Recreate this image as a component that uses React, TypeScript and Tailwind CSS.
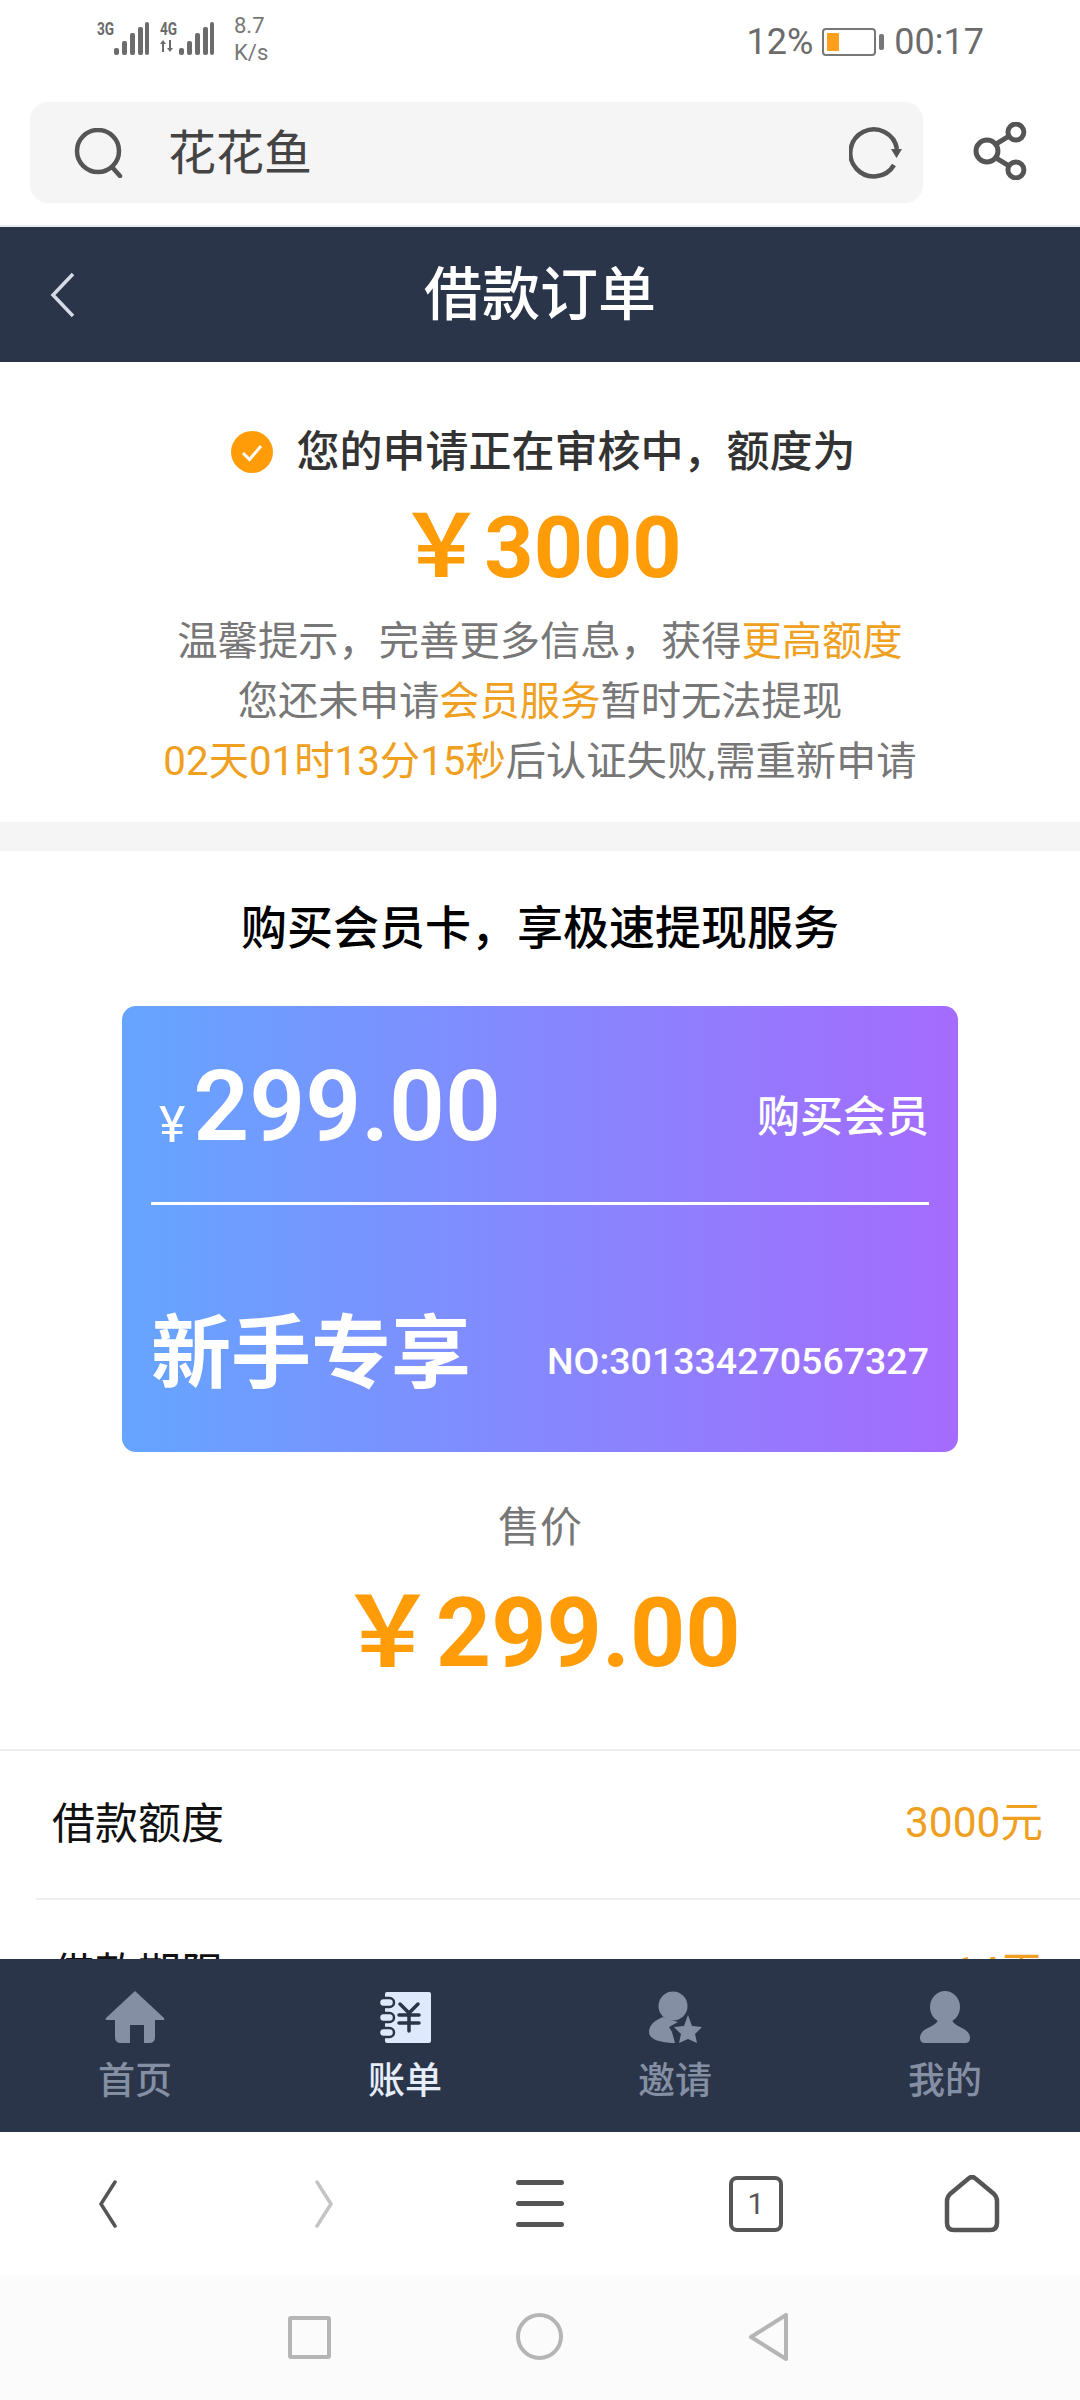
import React from 'react';

const fontStack = "font-['Roboto','Noto_Sans_CJK_SC',sans-serif]";

const StatusBar = () => (
  <div className="flex h-[102px] items-start justify-between bg-white pl-[97px] pr-[96px]">
    <div className="flex items-start pt-[14px] text-[#6b6b6b]">
      <span className="mt-[6px] w-[17px] origin-left scale-x-[0.72] text-[19px] font-bold leading-[18px]">3G</span>
      <svg width="36" height="36" viewBox="0 0 36 36" className="mt-[7px]" fill="#6b6b6b">
        <rect x="0" y="27" width="5" height="7" rx="2" />
        <rect x="8" y="20" width="5" height="14" rx="2" />
        <rect x="16" y="12" width="5" height="22" rx="2" />
        <rect x="24" y="6" width="5" height="28" rx="2" />
        <rect x="31" y="1" width="4" height="33" rx="2" />
      </svg>
      <div className="ml-[10px] flex flex-col">
        <span className="mt-[6px] w-[18px] origin-left scale-x-[0.72] text-[19px] font-bold leading-[18px]">4G</span>
        <svg width="18" height="12" viewBox="0 0 18 12" className="mt-[2px]" fill="#6b6b6b">
          <path d="M3 0l3 4H4v8H2V4H0zM9 0h2v8h2l-3 4-3-4h2z" />
        </svg>
      </div>
      <svg width="36" height="36" viewBox="0 0 36 36" className="mt-[7px]" fill="#6b6b6b">
        <rect x="1" y="27" width="5" height="7" rx="2" />
        <rect x="9" y="20" width="5" height="14" rx="2" />
        <rect x="17" y="12" width="5" height="22" rx="2" />
        <rect x="25" y="6" width="5" height="28" rx="2" />
        <rect x="32" y="1" width="4" height="33" rx="2" />
      </svg>
      <div className="ml-[20px] -mt-[2px] flex flex-col text-[22px] leading-[27px] text-[#777]">
        <span>8.7</span>
        <span>K/s</span>
      </div>
    </div>
    <div className="flex items-center pt-[22px] text-[36px] leading-[40px] text-[#6b6b6b]">
      <span>12%</span>
      <div className="ml-[9px] h-[28px] w-[54px] rounded-[4px] border-2 border-[#777] p-[3px]">
        <div className="h-full w-[12px] rounded-[1px] bg-[#ff9f1c]" />
      </div>
      <div className="ml-[3px] h-[16px] w-[5px] rounded-[2px] bg-[#777]" />
      <span className="ml-[10px]">00:17</span>
    </div>
  </div>
);

const SearchRow = () => (
  <div className="flex h-[123px] bg-white pl-[30px] pr-[53px]">
    <div className="flex h-[101px] w-[895px] items-center rounded-[18px] bg-[#f5f5f5] pl-[44px] pr-[20px]">
      <svg width="50" height="50" viewBox="0 0 50 50" fill="none" stroke="#555" strokeWidth="4.500">
        <circle cx="24" cy="23" r="21" />
        <path d="M38 39l8 9" strokeLinecap="round" />
      </svg>
      <span className="ml-[44px] flex-1 pt-[2px] text-[48px] leading-[60px] text-[#444]">花花鱼</span>
      <svg width="54" height="52" viewBox="0 0 54 52" fill="none" stroke="#555" strokeWidth="4.500">
        <path d="M45 38A23.500 23.500 0 1 1 48 22" />
        <path d="M42 22h11l-5.500 9z" fill="#555" stroke="none" />
      </svg>
    </div>
    <svg width="54" height="58" viewBox="0 0 54 58" fill="none" stroke="#555" strokeWidth="5" className="ml-[50px] mt-[20px]">
      <circle cx="14" cy="29" r="11" />
      <circle cx="43" cy="10" r="8" />
      <circle cx="43" cy="48" r="8" />
      <path d="M23 22l13-8M23 36l13 8" />
    </svg>
  </div>
);

const Header = () => (
  <div className="flex h-[137px] items-center border-t-2 border-[#e9edf1] bg-[#2b3549] pl-[50px]">
    <svg width="26" height="46" viewBox="0 0 26 46" fill="none" stroke="#d5dbe6" strokeWidth="3.500">
      <path d="M23 2L3 23l20 21" />
    </svg>
    <h1 className="-ml-[76px] flex-1 text-center text-[58px] font-medium leading-[70px] text-white">借款订单</h1>
  </div>
);

const ApplyStatus = () => (
  <section className="bg-white pb-[30px] pt-[60px] text-center">
    <div className="flex h-[60px] items-center justify-center pl-[6px]">
      <svg width="42" height="42" viewBox="0 0 42 42">
        <circle cx="21" cy="21" r="21" fill="#ff9c07" />
        <path d="M12 22l6.500 6.500L30 15" fill="none" stroke="#fff" strokeWidth="3" />
      </svg>
      <span className="ml-[24px] text-[43px] font-medium leading-[60px] text-[#333]">您的申请正在审核中，额度为</span>
    </div>
    <div className="mt-[16px] text-[86px] font-bold leading-[100px] text-[#ff9c07]">￥3000</div>
    <div className="mt-[14px] text-[40.300px] leading-[60px] text-[#777]">
      <p>温馨提示，完善更多信息，获得<span className="text-[#f0a020]">更高额度</span></p>
      <p>您还未申请<span className="text-[#f0a020]">会员服务</span>暂时无法提现</p>
      <p><span className="text-[#f0a020]">02天01时13分15秒</span>后认证失败,需重新申请</p>
    </div>
  </section>
);

const MemberCard = () => (
  <div className="mx-[122px] mt-[48px] h-[446px] rounded-[14px] bg-linear-to-r/srgb from-[#65a5ff] to-[#a56bfd] px-[29px] text-white">
    <div className="flex h-[199px] items-center justify-between border-b-[3px] border-white">
      <div className="flex items-end pt-[5px]">
        <span className="mb-[12px] ml-[8px] text-[50px] leading-[50px]">¥</span>
        <span className="ml-[8px] text-[98px] font-semibold leading-[110px]">299.00</span>
      </div>
      <span className="pt-[26px] text-[43px] font-medium leading-[60px]">购买会员</span>
    </div>
    <div className="flex h-[244px] items-center justify-between pt-[50px]">
      <span className="pt-[3px] text-[80px] font-semibold leading-[100px]">新手专享</span>
      <span className="pt-[18px] text-[37.500px] font-medium leading-[50px]">NO:301334270567327</span>
    </div>
  </div>
);

const PriceRow = ({ label, value, last }: { label: string; value: string; last?: boolean }) => (
  <div className={`ml-[36px] flex h-[149px] items-center justify-between pl-[16px] pr-[37px] ${last ? '' : 'border-b-2 border-[#eeeeee]'}`}>
    <span className="-mt-[2px] text-[43px] leading-[60px] text-[#111]">{label}</span>
    <span className="-mt-[3px] text-[42.500px] leading-[60px] text-[#f0a020]">{value}</span>
  </div>
);

const Purchase = () => (
  <section className="bg-white pt-[47px]">
    <h2 className="text-center text-[46px] font-medium leading-[60px] text-black">购买会员卡，享极速提现服务</h2>
    <MemberCard />
    <div className="mt-[46px] text-center text-[42px] leading-[60px] text-[#777]">售价</div>
    <div className="mt-[20px] text-center text-[96.500px] font-bold leading-[110px] text-[#ff9c07]">￥299.00</div>
    <div className="mt-[61px] border-t-2 border-[#eeeeee]">
      <PriceRow label="借款额度" value="3000元" />
      <PriceRow label="借款期限" value="14天" last />
    </div>
  </section>
);

const HomeIcon = () => (
  <svg width="60" height="53" viewBox="0 0 60 53" fill="#858fa3">
    <path d="M30 0L59 27Q60 29 58 29H2Q0 29 1 27Z" />
    <path d="M10 29H50V46Q50 52 44 52H39V34H25V52H16Q10 52 10 46Z" />
  </svg>
);

const LedgerIcon = () => (
  <svg width="52" height="53" viewBox="0 0 52 53">
    <rect x="6" y="1" width="46" height="51" rx="2" fill="#dfe9fd" />
    <g fill="#dfe9fd" stroke="#2b3549" strokeWidth="2.500">
      <rect x="0" y="7" width="15" height="9" rx="4.500" />
      <rect x="0" y="22" width="15" height="9" rx="4.500" />
      <rect x="0" y="37" width="15" height="9" rx="4.500" />
    </g>
    <path d="M21 13l9 9 9-9M20 24h20M20 32h20M30 22v18" fill="none" stroke="#2b3549" strokeWidth="3.500" strokeLinecap="round" />
  </svg>
);

const InviteIcon = () => (
  <svg width="54" height="53" viewBox="0 0 54 53" fill="#858fa3">
    <circle cx="25" cy="15" r="14.500" />
    <path d="M15 26C7 29 1 34 1 41C1 48 12 52 27 52L24 41L21 36L30 31C25 30 20 28 15 26Z" />
    <path d="M40 24L44 35L54 36L47 43L49 52L40 48L31 52L33 43L26 36L36 35Z" />
  </svg>
);

const PersonIcon = () => (
  <svg width="52" height="53" viewBox="0 0 52 53" fill="#858fa3">
    <ellipse cx="26" cy="16" rx="15" ry="16" />
    <path d="M19 28H33C33 36 51 36 51 47Q51 52 46 52H6Q1 52 1 47C1 36 19 36 19 28Z" />
  </svg>
);

const tabs = [
  { label: '首页', icon: <HomeIcon />, active: false },
  { label: '账单', icon: <LedgerIcon />, active: true },
  { label: '邀请', icon: <InviteIcon />, active: false },
  { label: '我的', icon: <PersonIcon />, active: false },
];

const TabBar = () => (
  <nav className="grid h-[173px] grid-cols-4 bg-[#2b3549] pt-[32px]">
    {tabs.map((tab) => (
      <div key={tab.label} className="flex flex-col items-center">
        {tab.icon}
        <span className={`mt-[13px] text-[37px] font-medium leading-[50px] ${tab.active ? 'text-[#e6edfb]' : 'text-[#858fa3]'}`}>{tab.label}</span>
      </div>
    ))}
  </nav>
);

const BrowserBar = () => (
  <div className="grid h-[143px] grid-cols-5 items-center justify-items-center bg-white">
    <svg width="20" height="48" viewBox="0 0 20 48" fill="none" stroke="#555" strokeWidth="3.500" strokeLinecap="round">
      <path d="M17 2L3 24l14 22" />
    </svg>
    <svg width="20" height="48" viewBox="0 0 20 48" fill="none" stroke="#c4c4c4" strokeWidth="3.500" strokeLinecap="round">
      <path d="M3 2l14 22L3 46" />
    </svg>
    <div className="flex w-[48px] flex-col gap-[16px]">
      <div className="h-[5px] rounded-full bg-[#555]" />
      <div className="h-[5px] rounded-full bg-[#555]" />
      <div className="h-[5px] rounded-full bg-[#555]" />
    </div>
    <div className="flex h-[56px] w-[54px] items-center justify-center rounded-[8px] border-[4px] border-[#555] text-[30px] leading-none text-[#555]">1</div>
    <svg width="58" height="58" viewBox="0 0 58 58" fill="none" stroke="#555" strokeWidth="4.500" strokeLinejoin="round">
      <path d="M25 4Q29 0 33 4L51 19Q54 22 54 26V48Q54 55 47 55H11Q4 55 4 48V26Q4 22 7 19Z" />
    </svg>
  </div>
);

const SystemNav = () => (
  <div className="flex h-[125px] items-start gap-[185px] bg-[#fbfbfb] pl-[288px] pt-[38px]">
    <div className="mt-[3px] h-[43px] w-[43px] rounded-[3px] border-[4px] border-[#b5b5b5]" />
    <div className="h-[47px] w-[47px] rounded-full border-[4px] border-[#b5b5b5]" />
    <svg width="40" height="48" viewBox="0 0 40 48" fill="none" stroke="#b5b5b5" strokeWidth="4" strokeLinejoin="round">
      <path d="M38 2V46L3 24Z" />
    </svg>
  </div>
);

export default function App() {
  return (
    <div className={`flex h-[2400px] w-[1080px] flex-col overflow-hidden bg-white ${fontStack}`}>
      <StatusBar />
      <SearchRow />
      <Header />
      <main className="min-h-0 flex-1 overflow-hidden bg-[#f5f5f5]">
        <ApplyStatus />
        <div className="h-[29px]" />
        <Purchase />
      </main>
      <TabBar />
      <BrowserBar />
      <SystemNav />
    </div>
  );
}
